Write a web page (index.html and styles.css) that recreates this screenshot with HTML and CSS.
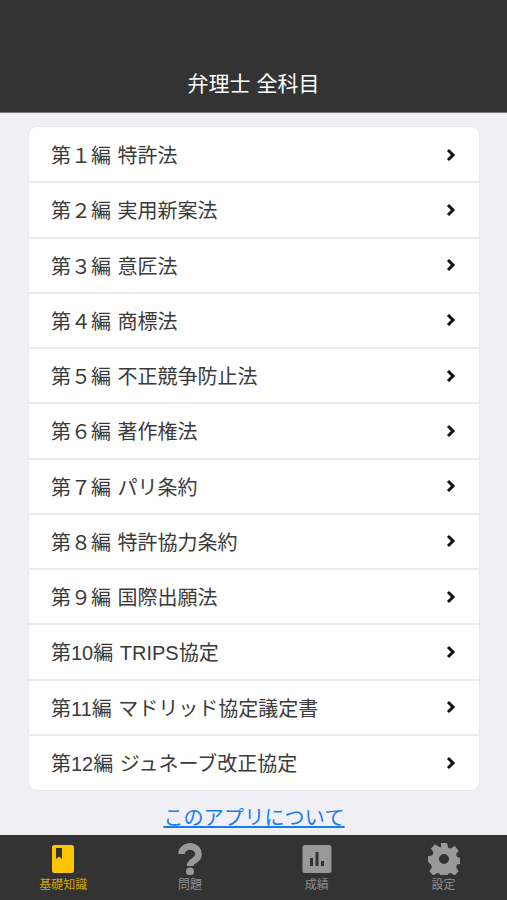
FILE: index.html
```html
<!DOCTYPE html>
<html lang="ja">
<head>
  <meta charset="UTF-8">
  <title>弁理士 全科目</title>
  <link rel="stylesheet" href="styles.css">
</head>
<body>

  <!-- Header -->
  <header class="top-bar">
    <h1>弁理士 全科目</h1>
  </header>

  <main class="content">
    <ul class="chapter-list">
      <li>第１編 特許法<svg class="chevron" viewBox="0 0 10 14"><path d="M2 2l5 5-5 5"/></svg></li>
      <li>第２編 実用新案法<svg class="chevron" viewBox="0 0 10 14"><path d="M2 2l5 5-5 5"/></svg></li>
      <li>第３編 意匠法<svg class="chevron" viewBox="0 0 10 14"><path d="M2 2l5 5-5 5"/></svg></li>
      <li>第４編 商標法<svg class="chevron" viewBox="0 0 10 14"><path d="M2 2l5 5-5 5"/></svg></li>
      <li>第５編 不正競争防止法<svg class="chevron" viewBox="0 0 10 14"><path d="M2 2l5 5-5 5"/></svg></li>
      <li>第６編 著作権法<svg class="chevron" viewBox="0 0 10 14"><path d="M2 2l5 5-5 5"/></svg></li>
      <li>第７編 パリ条約<svg class="chevron" viewBox="0 0 10 14"><path d="M2 2l5 5-5 5"/></svg></li>
      <li>第８編 特許協力条約<svg class="chevron" viewBox="0 0 10 14"><path d="M2 2l5 5-5 5"/></svg></li>
      <li>第９編 国際出願法<svg class="chevron" viewBox="0 0 10 14"><path d="M2 2l5 5-5 5"/></svg></li>
      <li>第10編 TRIPS協定<svg class="chevron" viewBox="0 0 10 14"><path d="M2 2l5 5-5 5"/></svg></li>
      <li>第11編 マドリッド協定議定書<svg class="chevron" viewBox="0 0 10 14"><path d="M2 2l5 5-5 5"/></svg></li>
      <li>第12編 ジュネーブ改正協定<svg class="chevron" viewBox="0 0 10 14"><path d="M2 2l5 5-5 5"/></svg></li>
    </ul>
    <a class="about-link" href="#">このアプリについて</a>
  </main>

  <!-- Tab bar -->
  <footer class="tab-bar">
    <div class="tab active">
      <svg class="tab-icon" viewBox="0 0 32 32">
        <path fill="#ffc400" fill-rule="evenodd" d="M7.500 2h17A2.500 2.500 0 0 1 27 4.500v23a2.500 2.500 0 0 1-2.500 2.500h-17A2.500 2.500 0 0 1 5 27.500v-23A2.500 2.500 0 0 1 7.500 2zM9 5v11l3-2.500 3 2.500V5z"/>
      </svg>
      <span>基礎知識</span>
    </div>
    <div class="tab">
      <svg class="tab-icon" viewBox="0 0 32 32">
        <path fill="none" stroke="#999" stroke-width="6.500" d="M7.500 11a8.500 7.500 0 1 1 13.500 6c-3 2-5 3-5 6"/>
        <circle cx="16" cy="28.500" r="4" fill="#999"/>
      </svg>
      <span>問題</span>
    </div>
    <div class="tab">
      <svg class="tab-icon" viewBox="0 0 32 32">
        <path fill="#999" fill-rule="evenodd" d="M4 2h24a2.500 2.500 0 0 1 2.500 2.500v23A2.500 2.500 0 0 1 28 30H4a2.500 2.500 0 0 1-2.500-2.500v-23A2.500 2.500 0 0 1 4 2zM9 15v8h3v-8zM14.500 9v14h3V9zM20 18v5h3v-5z"/>
      </svg>
      <span>成績</span>
    </div>
    <div class="tab">
      <svg class="tab-icon" viewBox="0 0 32 32">
        <path fill="#999" fill-rule="evenodd" d="M13 0h6l1 4.500 2.600 1.100 4-2.500 4 4.300-2.500 3.900 1 2.700 4.400 1v5.600l-4.400 1-1 2.700 2.500 3.900-4 4.300-4-2.500-2.600 1.100-1 4.500h-6l-1-4.500-2.600-1.100-4 2.500-4-4.300 2.500-3.900-1-2.700L0 18.800v-5.600l4.400-1 1-2.700-2.500-3.900 4-4.300 4 2.500L13 4.500zM16 11a5 5 0 1 0 0 10 5 5 0 0 0 0-10z"/>
      </svg>
      <span>設定</span>
    </div>
  </footer>

</body>
</html>
```

FILE: styles.css
```css
html, body {
  height: 100%;
}

body {
  margin: 0;
  font-family: "Liberation Sans", "Noto Sans CJK JP", sans-serif;
  background-color: #efeff4;
  display: flex;
  flex-direction: column;
  overflow: hidden;
}

.top-bar {
  height: 113px;
  flex-shrink: 0;
  box-sizing: border-box;
  padding-bottom: 14px;
  background-color: #333;
  border-bottom: 1px solid #777;
  display: flex;
  align-items: flex-end;
  justify-content: center;
}

.top-bar h1 {
  margin: 0;
  color: #fff;
  font-size: 21px;
  font-weight: 400;
  line-height: 28px;
}

.content {
  flex-grow: 1;
  padding: 14px 28px 0 29px;
  display: flex;
  flex-direction: column;
}

.chapter-list {
  list-style: none;
  margin: 0;
  padding: 1px 0 0;
  background-color: #fff;
  border-radius: 8px;
  box-shadow: 0 0 0 1px #e8e8ec;
}

.chapter-list li {
  height: 55.25px;
  box-sizing: border-box;
  padding: 0 23px 0 22px;
  display: flex;
  align-items: center;
  justify-content: space-between;
  font-size: 20px;
  color: #3a3a3a;
  word-spacing: 1px;
  border-bottom: 2px solid #ebebef;
}

.chapter-list li:last-child {
  height: 54.25px;
  border-bottom: none;
}

.chevron {
  width: 10px;
  height: 14px;
  fill: none;
  stroke: #111;
  stroke-width: 3;
}

.about-link {
  margin-top: 14px;
  text-align: center;
  color: #1a7cf0;
  font-size: 20px;
  line-height: 28px;
  letter-spacing: 0.2px;
}

.tab-bar {
  height: 65px;
  flex-shrink: 0;
  box-sizing: border-box;
  background-color: #333;
  display: flex;
}

.tab {
  flex: 1;
  display: flex;
  flex-direction: column;
  align-items: center;
  padding-top: 8px;
  color: #8f8f8f;
  font-size: 12px;
  line-height: 16px;
}

.tab span {
  margin-top: 2px;
}

.tab.active {
  color: #d2a400;
}

.tab-icon {
  width: 32px;
  height: 32px;
}
```
